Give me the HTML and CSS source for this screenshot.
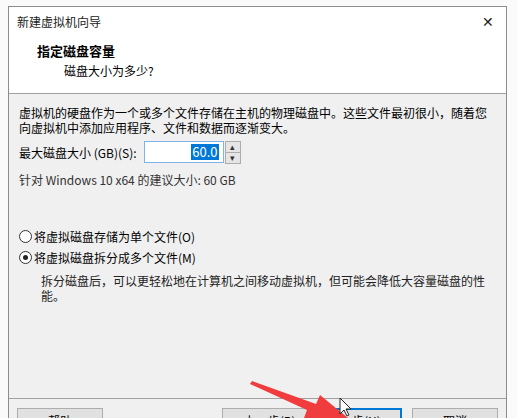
FILE: index.html
```html
<!DOCTYPE html>
<html lang="zh-CN">
<head>
    <meta charset="UTF-8">
    <title>新建虚拟机向导</title>
    <link rel="stylesheet" href="styles.css">
</head>
<body>
    <div class="wizard">
        <div class="titlebar">
            <span class="title">新建虚拟机向导</span>
            <span class="close">✕</span>
        </div>
        <div class="header">
            <div class="header-title">指定磁盘容量</div>
            <div class="header-sub">磁盘大小为多少?</div>
        </div>
        <div class="content">
            <p class="intro">虚拟机的硬盘作为一个或多个文件存储在主机的物理磁盘中。这些文件最初很小，随着您<br>向虚拟机中添加应用程序、文件和数据而逐渐变大。</p>
            <div class="size-row">
                <label>最大磁盘大小 (GB)(S):</label>
                <div class="spin">
                    <div class="spin-input"><span class="sel">60.0</span></div>
                    <div class="spin-btns">
                        <div class="spin-btn">▴</div>
                        <div class="spin-btn">▾</div>
                    </div>
                </div>
            </div>
            <p class="hint">针对 Windows 10 x64 的建议大小: 60 GB</p>
            <div class="options">
                <div class="radio"><span class="dot"></span>将虚拟磁盘存储为单个文件(O)</div>
                <div class="radio"><span class="dot checked"></span>将虚拟磁盘拆分成多个文件(M)</div>
                <p class="desc">拆分磁盘后，可以更轻松地在计算机之间移动虚拟机，但可能会降低大容量磁盘的性<br>能。</p>
            </div>
        </div>
        <div class="footer">
            <button class="btn">帮助</button>
            <div class="spacer"></div>
            <button class="btn back">&lt; 上一步(B)</button>
            <button class="btn primary">下一步(N) &gt;</button>
            <button class="btn">取消</button>
        </div>
    </div>

    <svg class="overlay" width="517" height="418" viewBox="0 0 517 418">
        <polygon points="252,381 316,404 320,395 348,418 304,418 307,410 250,384" fill="#f03c3c"/>
        <path d="M340,398 L340,414 L344,410 L347,416 L349,415 L346,409 L351,409 Z" fill="#fff" stroke="#222" stroke-width="1"/>
    </svg>
</body>
</html>
```

FILE: styles.css
```css
body {
    margin: 0;
    width: 517px;
    height: 418px;
    overflow: hidden;
    background: #fafafa;
    font-family: "Noto Sans CJK SC", "Noto Sans", sans-serif;
    font-size: 12px;
    line-height: 15px;
    color: #000;
    position: relative;
}
.wizard {
    margin: 6px 0 0 8px;
    width: 497px;
    border: 1px solid #8c8c8c;
    background: #f0f0f0;
}
.titlebar {
    background: #fff;
    height: 28px;
    display: flex;
    align-items: center;
    justify-content: space-between;
    padding: 0 12px 0 8px;
}
.title {
    color: #222;
    margin-top: 1px;
}
.close {
    font-size: 14px;
    color: #222;
}
.header {
    box-sizing: border-box;
    background: #fff;
    height: 59px;
    padding: 7px 0 0 28px;
    border-bottom: 1px solid #a0a0a0;
}
.header-title {
    font-weight: bold;
    font-size: 13px;
    line-height: 18px;
}
.header-sub {
    margin: 3px 0 0 27px;
    line-height: 16px;
}
.content {
    box-sizing: border-box;
    height: 305px;
    padding: 11px 10px 0 10px;
    border-bottom: 1px solid #a0a0a0;
}
.intro {
    margin: 0;
}
.size-row {
    display: flex;
    align-items: center;
    height: 22px;
    margin-top: 6px;
}
.size-row label {
    margin-right: 7px;
}
.spin {
    display: flex;
    align-items: center;
}
.spin-input {
    width: 74px;
    height: 20px;
    border: 1px solid #7eb4ea;
    background: #fff;
    display: flex;
    align-items: center;
    justify-content: flex-end;
    padding-right: 4px;
}
.sel {
    background: #0078d7;
    color: #fff;
    font-size: 13px;
    line-height: 16px;
    padding: 0 1px;
}
.spin-btns {
    display: flex;
    flex-direction: column;
    margin-left: 1px;
}
.spin-btn {
    width: 14px;
    height: 10px;
    border: 1px solid #adadad;
    background: #e5e5e5;
    font-size: 9px;
    line-height: 10px;
    text-align: center;
    color: #333;
    margin-bottom: -1px;
}
.hint {
    margin: 9px 0 0 0;
    color: #333;
}
.options {
    margin-top: 39px;
}
.radio {
    display: flex;
    align-items: center;
    height: 20px;
    margin-bottom: 1px;
}
.dot {
    width: 11px;
    height: 11px;
    border: 1px solid #333;
    border-radius: 50%;
    background: #fff;
    margin-right: 2px;
    position: relative;
}
.dot.checked::after {
    content: "";
    position: absolute;
    left: 3px;
    top: 3px;
    width: 5px;
    height: 5px;
    border-radius: 50%;
    background: #222;
}
.desc {
    margin: 6px 0 0 22px;
    color: #222;
}
.footer {
    display: flex;
    padding: 9px 8px 10px 8px;
    gap: 10px;
}
.spacer {
    flex: 1;
}
.btn {
    width: 86px;
    height: 24px;
    border: 1px solid #adadad;
    background: #e1e1e1;
    font-family: "Noto Sans CJK SC", "Noto Sans", sans-serif;
    font-size: 12px;
    padding: 0;
}
.btn.back {
    margin-right: -2px;
}
.btn.primary {
    border: 2px solid #0078d7;
}
.overlay {
    position: absolute;
    left: 0;
    top: 0;
}
```
